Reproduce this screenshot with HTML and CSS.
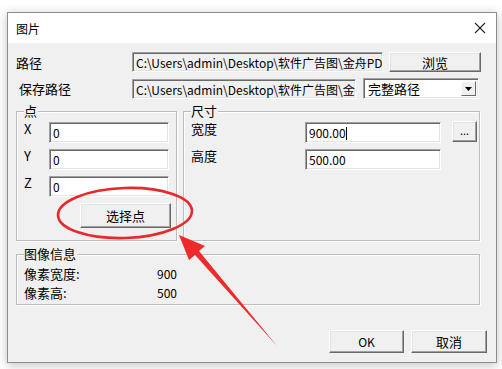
FILE: index.html
```html
<!DOCTYPE html>
<html lang="zh-CN">
<head>
    <meta charset="UTF-8">
    <title>图片</title>
    <link rel="stylesheet" href="styles.css">
</head>
<body>
<div class="screen">
    <div class="dialog">
        <div class="titlebar">
            <span class="title">图片</span>
            <svg class="close" width="12" height="12" viewBox="0 0 12 12">
                <path d="M1 1L11 11M11 1L1 11" stroke="#222" stroke-width="1.1" fill="none"/>
            </svg>
        </div>
        <div class="content">
            <div class="row row-path">
                <span class="label">路径</span>
                <div class="field field-ro path-long">C:\Users\admin\Desktop\软件广告图\金舟PD</div>
                <div class="btn btn-browse">浏览</div>
            </div>
            <div class="row row-save">
                <span class="label label-save">保存路径</span>
                <div class="field field-ro path-short">C:\Users\admin\Desktop\软件广告图\金</div>
                <div class="combo">
                    <span class="combo-text">完整路径</span>
                    <span class="combo-btn">
                        <svg width="7" height="4" viewBox="0 0 7 4"><path d="M0 0H7L3.5 4Z" fill="#000"/></svg>
                    </span>
                </div>
            </div>

            <div class="groups">
                <div class="group group-point">
                    <span class="legend">点</span>
                    <div class="coord">
                        <span class="axis">X</span>
                        <div class="field field-coord">0</div>
                    </div>
                    <div class="coord">
                        <span class="axis">Y</span>
                        <div class="field field-coord">0</div>
                    </div>
                    <div class="coord">
                        <span class="axis">Z</span>
                        <div class="field field-coord">0</div>
                    </div>
                    <div class="btn btn-pick">选择点</div>
                </div>

                <div class="group group-size">
                    <span class="legend">尺寸</span>
                    <div class="size-row">
                        <span class="size-label">宽度</span>
                        <div class="field field-size">900.00<span class="caret"></span></div>
                        <div class="btn btn-dots">...</div>
                    </div>
                    <div class="size-row">
                        <span class="size-label">高度</span>
                        <div class="field field-size">500.00</div>
                    </div>
                </div>
            </div>

            <div class="group group-info">
                <span class="legend">图像信息</span>
                <div class="info-row">
                    <span class="info-label">像素宽度:</span>
                    <span class="info-value">900</span>
                </div>
                <div class="info-row">
                    <span class="info-label">像素高:</span>
                    <span class="info-value">500</span>
                </div>
            </div>

            <div class="footer">
                <div class="btn btn-ok">OK</div>
                <div class="btn btn-cancel">取消</div>
            </div>
        </div>
    </div>

    <svg class="annot" width="502" height="369" viewBox="0 0 502 369">
        <ellipse cx="125" cy="213" rx="67" ry="25" fill="none" stroke="#e8282b" stroke-width="2.6" transform="rotate(-2 125 213)"/>
        <polygon points="179,235 205,246 199,251 277,346 195,255 189,260" fill="#ee2a2a"/>
    </svg>
</div>
</body>
</html>
```

FILE: styles.css
```css
* {
    box-sizing: border-box;
}

body {
    margin: 0;
    background: #fff;
    font-family: "Noto Sans CJK SC", "Liberation Sans", sans-serif;
    font-size: 12px;
    color: #000;
}

.screen {
    position: relative;
    width: 502px;
    height: 369px;
    padding: 12px 0 0 7px;
}

.dialog {
    width: 490px;
    height: 351px;
    border: 1px solid #8c8c8c;
    background: #f0f0f0;
    box-shadow: 0 2px 10px rgba(0, 0, 0, 0.25);
    display: flex;
    flex-direction: column;
}

.titlebar {
    height: 30px;
    background: #fff;
    display: flex;
    align-items: center;
    justify-content: space-between;
    padding: 0 10px 0 8px;
}

.title {
    font-size: 12px;
}

.content {
    flex: 1;
    padding: 9px 9px 0 8px;
}

/* top rows */
.row {
    display: flex;
    align-items: center;
}

.row-path {
    height: 20px;
}

.row-save {
    height: 21px;
    margin-top: 6px;
}

.label {
    width: 116px;
    font-size: 13px;
}

.label-save {
    padding-left: 3px;
}

.field {
    height: 20px;
    background: #fff;
    border-top: 1px solid #a0a0a0;
    border-left: 1px solid #a0a0a0;
    border-right: 1px solid #fff;
    border-bottom: 1px solid #fff;
    box-shadow: inset 1px 1px 0 #696969, inset -1px -1px 0 #e3e3e3;
    padding: 2px 0 0 3px;
    font-size: 12px;
    line-height: 15px;
    white-space: nowrap;
    overflow: hidden;
}

.field-ro {
    background: #f0f0f0;
}

.path-long {
    width: 251px;
}

.path-short {
    width: 224px;
}

.btn {
    display: flex;
    align-items: center;
    justify-content: center;
    background: #f0f0f0;
    border-top: 1px solid #fff;
    border-left: 1px solid #fff;
    border-right: 1px solid #696969;
    border-bottom: 1px solid #696969;
    box-shadow: inset -1px -1px 0 #a0a0a0, inset 1px 1px 0 #e3e3e3;
    font-size: 13px;
}

.btn-browse {
    width: 92px;
    height: 20px;
    margin-left: 6px;
}

.combo {
    width: 116px;
    height: 21px;
    margin-left: 7px;
    background: #fff;
    border-top: 1px solid #a0a0a0;
    border-left: 1px solid #a0a0a0;
    border-right: 1px solid #fff;
    border-bottom: 1px solid #fff;
    box-shadow: inset 1px 1px 0 #696969, inset -1px -1px 0 #e3e3e3;
    display: flex;
    align-items: center;
    justify-content: space-between;
    padding: 2px 2px 2px 4px;
}

.combo-text {
    font-size: 13px;
}

.combo-btn {
    width: 15px;
    height: 15px;
    display: flex;
    align-items: center;
    justify-content: center;
    background: #f0f0f0;
    border-top: 1px solid #fff;
    border-left: 1px solid #fff;
    border-right: 1px solid #696969;
    border-bottom: 1px solid #696969;
}

/* group boxes */
.groups {
    display: flex;
    gap: 6px;
    margin-top: 12px;
}

.group {
    position: relative;
    border: 1px solid #bcbcbc;
    box-shadow: 1px 1px 0 #fff, inset 1px 1px 0 #fff;
}

.legend {
    position: absolute;
    top: -9px;
    left: 7px;
    background: #f0f0f0;
    font-size: 13px;
    line-height: 16px;
    padding-right: 1px;
}

.group-point {
    width: 161px;
    height: 130px;
    padding: 10px 0 0 7px;
}

.coord {
    display: flex;
    height: 21px;
    margin-bottom: 6px;
}

.axis {
    width: 25px;
    font-size: 13px;
    line-height: 13px;
}

.field-coord {
    width: 120px;
    height: 21px;
}

.btn-pick {
    width: 91px;
    height: 25px;
    margin: 1px 0 0 56px;
}

.group-size {
    width: 297px;
    height: 130px;
    padding: 9px 0 0 7px;
}

.size-row {
    display: flex;
    height: 21px;
    margin-bottom: 6px;
}

.size-label {
    width: 114px;
    font-size: 13px;
    line-height: 13px;
    padding-top: 1px;
}

.field-size {
    width: 136px;
    height: 21px;
    margin-top: 1px;
}

.caret {
    display: inline-block;
    width: 1px;
    height: 13px;
    background: #000;
    vertical-align: -2px;
}

.btn-dots {
    width: 25px;
    height: 21px;
    margin-left: 11px;
    font-size: 11px;
    padding-bottom: 4px;
}

.group-info {
    width: 464px;
    height: 51px;
    margin-top: 13px;
    padding: 9px 0 0 7px;
}

.info-row {
    display: flex;
    height: 19px;
    align-items: center;
    font-size: 13px;
}

.info-label {
    width: 133px;
}

.info-value {
    font-size: 12px;
}

.footer {
    display: flex;
    justify-content: flex-end;
    gap: 7px;
    margin-top: 25px;
}

.btn-ok {
    width: 75px;
    height: 23px;
    font-size: 12px;
}

.btn-cancel {
    width: 76px;
    height: 23px;
}

.annot {
    position: absolute;
    left: 0;
    top: 0;
    pointer-events: none;
}
```
